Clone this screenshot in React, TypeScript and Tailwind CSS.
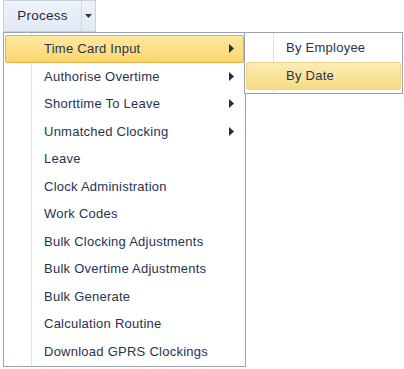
import React from 'react';

const items = [
  { label: 'Time Card Input', sub: true },
  { label: 'Authorise Overtime', sub: true },
  { label: 'Shorttime To Leave', sub: true },
  { label: 'Unmatched Clocking', sub: true },
  { label: 'Leave' },
  { label: 'Clock Administration' },
  { label: 'Work Codes' },
  { label: 'Bulk Clocking Adjustments' },
  { label: 'Bulk Overtime Adjustments' },
  { label: 'Bulk Generate' },
  { label: 'Calculation Routine' },
  { label: 'Download GPRS Clockings' },
];

const Arrow = () => (
  <svg width="5" height="9" viewBox="0 0 5 9" className="shrink-0">
    <path d="M0 0 L5 4.5 L0 9 Z" fill="#1e3050" />
  </svg>
);

export default function App() {
  return (
    <div
      className="w-[404px] h-[369px] bg-white relative text-[13px] tracking-[0.25px] text-[#26334f]"
      style={{ fontFamily: '"Liberation Sans", Arial, sans-serif' }}
    >
      <div className="flex pl-[3px] h-[32px]">
        <div className="flex h-[32px] border border-[#c5d2e3] bg-gradient-to-b from-[#eef3fa] to-[#e1e9f4]">
          <div className="w-[78px] flex items-center justify-center text-[13.5px] text-[#1d2a44] border-r border-[#f2d98a]">
            Process
          </div>
          <div className="w-[13px] flex items-center justify-center">
            <svg width="7" height="4" viewBox="0 0 7 4">
              <path d="M0 0 H7 L3.5 4 Z" fill="#2a3550" />
            </svg>
          </div>
        </div>
      </div>

      <div className="ml-[3px] w-[243px] h-[335px] border border-[#9aa3ae] bg-white relative pt-[2px]">
        <div className="absolute left-[27px] top-0 bottom-0 w-px bg-[#e2e3e5]" />
        <div className="absolute left-[28px] top-0 bottom-0 w-px bg-white" />
        {items.map((it, i) => (
          <div
            key={i}
            className={
              'relative h-[27.5px] mx-[1px] flex items-center pl-[38px] pr-[9px] rounded-[2px] ' +
              (i === 0
                ? 'border border-[#e1b24a] bg-gradient-to-b from-[#fde89f] to-[#fbd66a]'
                : 'border border-transparent')
            }
          >
            <span className="flex-1 whitespace-nowrap">{it.label}</span>
            {it.sub && <Arrow />}
          </div>
        ))}
      </div>

      <div className="absolute left-[244px] top-[32px] w-[159px] h-[62px] border border-[#9aa3ae] bg-white p-[1px]">
        <div className="absolute left-[28px] top-0 bottom-0 w-px bg-[#e2e3e5]" />
        <div className="h-[28px] flex items-center pl-[39px] border border-transparent relative">By Employee</div>
        <div className="h-[28px] flex items-center pl-[39px] border border-[#f1d48c] rounded-[2px] bg-gradient-to-b from-[#fcecb4] to-[#f8dc84] relative">
          By Date
        </div>
      </div>
    </div>
  );
}
